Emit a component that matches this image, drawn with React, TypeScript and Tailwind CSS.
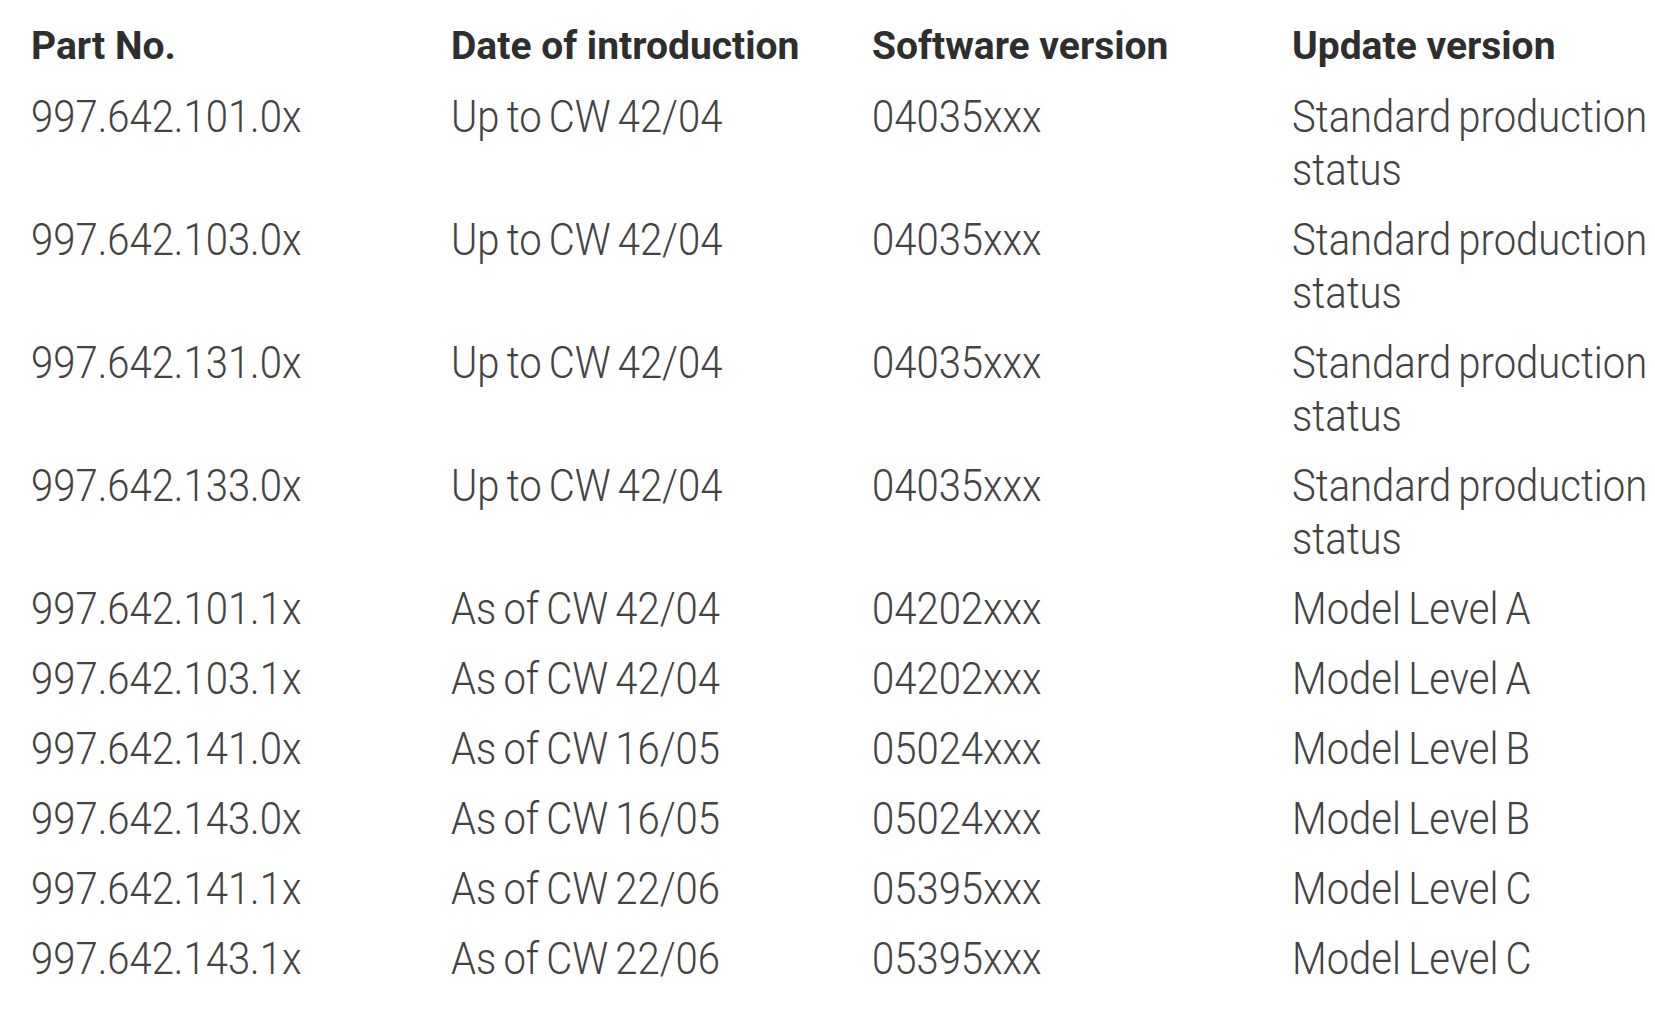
const ROWS: [string, string, string, string][] = [
  ['997.642.101.0x', 'Up to CW 42/04', '04035xxx', 'Standard production status'],
  ['997.642.103.0x', 'Up to CW 42/04', '04035xxx', 'Standard production status'],
  ['997.642.131.0x', 'Up to CW 42/04', '04035xxx', 'Standard production status'],
  ['997.642.133.0x', 'Up to CW 42/04', '04035xxx', 'Standard production status'],
  ['997.642.101.1x', 'As of CW 42/04', '04202xxx', 'Model Level A'],
  ['997.642.103.1x', 'As of CW 42/04', '04202xxx', 'Model Level A'],
  ['997.642.141.0x', 'As of CW 16/05', '05024xxx', 'Model Level B'],
  ['997.642.143.0x', 'As of CW 16/05', '05024xxx', 'Model Level B'],
  ['997.642.141.1x', 'As of CW 22/06', '05395xxx', 'Model Level C'],
  ['997.642.143.1x', 'As of CW 22/06', '05395xxx', 'Model Level C'],
]

const HEADERS = ['Part No.', 'Date of introduction', 'Software version', 'Update version']

export default function App() {
  return (
    <div className="w-[1655px] h-[1010px] bg-white overflow-hidden pt-[20px] pl-[31px] font-['Roboto',sans-serif]">
      <div className="grid grid-cols-[420px_421px_420px_340px] gap-y-[17px] text-[45px] leading-[53px] text-[#434343]">
        {HEADERS.map((h) => (
          <div key={h} className="whitespace-nowrap font-bold text-[#2e2e2e] text-[39px]">{h}</div>
        ))}
        {ROWS.map((r, i) =>
          r.map((cell, j) => (
            <div key={`${i}-${j}`} className="w-[430px] font-light [word-spacing:-3px] origin-left scale-x-[0.89]">{cell}</div>
          ))
        )}
      </div>
    </div>
  )
}
